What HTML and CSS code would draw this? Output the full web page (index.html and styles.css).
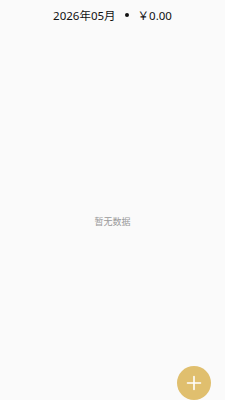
FILE: index.html
```html
<!DOCTYPE html>
<html lang="zh-CN">

<head>
    <meta charset="UTF-8">
    <meta name="viewport" content="width=device-width, initial-scale=1.0">
    <title>记账</title>
    <link rel="stylesheet" href="styles.css">
</head>

<body>
    <div class="page">
        <div class="top">
            <span>2026年05月</span>
            <span class="dot"></span>
            <span>￥0.00</span>
        </div>
        <div class="empty">暂无数据</div>
    </div>
    <button class="add">
        <svg width="16" height="16" viewBox="0 0 16 16">
            <path d="M8 1.5V14.5M1.5 8H14.5" stroke="#fff" stroke-width="1.6" stroke-linecap="round" />
        </svg>
    </button>
</body>

</html>
```

FILE: styles.css
```css
* {
    padding: 0;
    margin: 0;
    box-sizing: border-box;
}

body {
    width: 225px;
    height: 400px;
    background-color: #FAFAFA;
    font-family: "Noto Sans", "Noto Sans CJK SC", sans-serif;
    overflow: hidden;
    position: relative;
}

.page {
    display: flex;
    flex-direction: column;
    height: 400px;
}

.top {
    display: flex;
    justify-content: center;
    align-items: center;
    gap: 9px;
    height: 29px;
    font-size: 11.5px;
    color: #111;
}

.dot {
    width: 4px;
    height: 4px;
    margin-top: 1px;
    border-radius: 50%;
    background-color: #111;
}

.empty {
    flex: 1;
    display: flex;
    justify-content: center;
    align-items: center;
    padding-top: 13px;
    font-size: 9px;
    color: #999;
}

.add {
    position: absolute;
    right: 14px;
    bottom: 0;
    width: 34px;
    height: 34px;
    border: none;
    border-radius: 50%;
    background-color: #E0BF6E;
    display: flex;
    justify-content: center;
    align-items: center;
}
```
